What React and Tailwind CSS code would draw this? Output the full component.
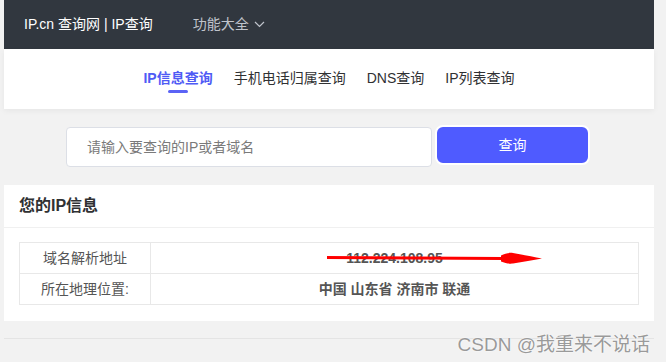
import React from 'react';

const font = { fontFamily: '"Liberation Sans", "Noto Sans CJK SC", sans-serif' };

const tabs = ['IP信息查询', '手机电话归属查询', 'DNS查询', 'IP列表查询'];

const App = () => {
  return (
    <div className="relative min-h-[362px] bg-[#f2f2f2] pl-[4px] pr-[12px]" style={font}>
      {/* Top bar */}
      <div className="flex h-[49px] items-center bg-[#31373f] pl-[20px] text-[14px]">
        <span className="text-white">IP.cn 查询网 | IP查询</span>
        <span className="ml-[40px] flex items-center text-[#c0c4cc]">
          功能大全
          <svg className="ml-[5px]" width="11" height="7" viewBox="0 0 11 7" fill="none">
            <path d="M1 1l4.5 4.5L10 1" stroke="#c0c4cc" strokeWidth="1.2" />
          </svg>
        </span>
      </div>

      {/* Tabs */}
      <div className="flex h-[60px] items-start justify-center gap-[21px] bg-white pt-[19px] shadow-[0_2px_6px_rgba(0,0,0,0.05)]">
        {tabs.map((t, i) => (
          <div key={t} className="flex flex-col items-center">
            <span
              className={
                i === 0
                  ? 'text-[14px] font-bold leading-[20px] text-[#4f5bf5]'
                  : 'text-[14px] leading-[20px] text-[#303133]'
              }
            >
              {t}
            </span>
            {i === 0 && <div className="mt-[2px] h-[3px] w-[20px] rounded-full bg-[#5b63f5]" />}
          </div>
        ))}
      </div>

      {/* Search */}
      <div className="flex items-start justify-center gap-[3px] pt-[16px] pr-[2px]">
        <div className="mt-[2px] flex h-[40px] w-[366px] items-center rounded-[4px] border border-[#dcdfe6] bg-white pl-[20px] text-[14px] text-[#7a7a7a]">
          请输入要查询的IP或者域名
        </div>
        <button className="flex h-[40px] w-[155px] items-center justify-center rounded-[8px] border-2 border-white bg-[#4f5bff] text-[14px] text-white">
          查询
        </button>
      </div>

      {/* IP info */}
      <div className="mt-[18px] bg-white pb-[16px]">
        <div className="flex h-[43px] items-center border-b border-[#f0f0f0] pl-[15px] text-[16px] font-bold text-[#303133]">
          您的IP信息
        </div>
        <div className="relative mx-[15px] mt-[14px] border border-[#e8e8e8] text-[14px] text-[#555]">
          <div className="flex h-[31px] items-center border-b border-[#e8e8e8]">
            <div className="flex h-full w-[131px] items-center justify-center border-r border-[#e8e8e8]">域名解析地址</div>
            <div className="flex-1 text-center font-bold">112.224.108.95</div>
          </div>
          <div className="flex h-[30px] items-center">
            <div className="flex h-full w-[131px] items-center justify-center border-r border-[#e8e8e8]">所在地理位置:</div>
            <div className="flex-1 text-center font-bold">中国 山东省 济南市 联通</div>
          </div>
          <svg className="absolute left-[307px] top-[8px]" width="215" height="14" viewBox="0 0 215 14">
            <path d="M0 6.5 L175 7.5" stroke="#ff0000" strokeWidth="3" />
            <path d="M174 4.5 C178 2.5 182 1.5 186 2 C196 3.5 206 6 215 7.5 C206 9 196 11 186 12.5 C182 13 178 12 174 10.5 Z" fill="#ff0000" />
          </svg>
        </div>
      </div>

      {/* Footer line */}
      <div className="mt-[17px] h-[24px] border-t border-[#e4e4e4]" />

      <div
        className="absolute right-[16px] top-[331px] text-[19px] text-[#9a9a9a]"
        style={{ textShadow: '0 0 2px #fff, 0 0 1px #fff' }}
      >
        CSDN @我重来不说话
      </div>
    </div>
  );
};

export default App;
